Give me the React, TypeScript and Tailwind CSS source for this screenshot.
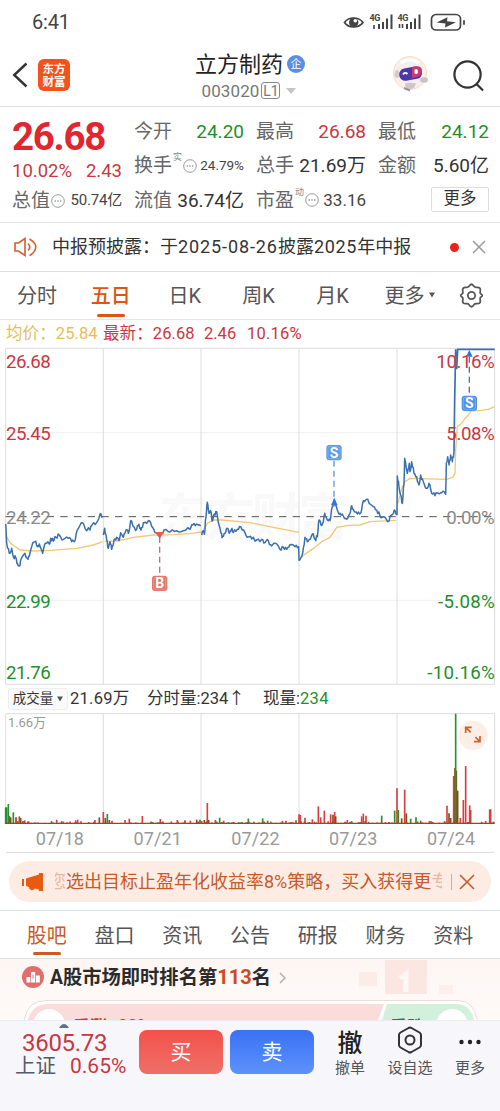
import React from 'react';
import clsx from 'clsx';

type Point = [number, number];
type Bar = [number, number, 'r' | 'g' | 'b'];

const RED = '#c9373f';
const GREEN = '#1f8f2b';
const GRID = '#dcdcdc';

// 价格线, 每个交易日一段 (坐标单位为 1/3 像素)
const priceDays: Point[][] = [
    [[17, 552], [20, 610], [28, 640], [35, 625], [40, 650], [48, 655], [52, 670], [60, 677], [64, 655], [75, 640], [82, 655], [88, 648], [95, 620], [105, 605], [112, 620], [118, 612], [128, 640], [136, 610], [148, 612], [152, 595], [160, 603], [168, 592], [178, 585], [190, 598], [205, 595], [215, 605], [223, 605], [232, 570], [244, 548], [255, 565], [270, 570], [277, 553], [290, 548], [300, 522], [308, 530]],
    [[310, 585], [314, 565], [320, 600], [325, 625], [330, 605], [335, 628], [342, 600], [350, 592], [357, 602], [362, 578], [370, 592], [378, 570], [385, 580], [392, 542], [400, 560], [410, 568], [417, 553], [423, 570], [430, 548], [440, 550], [448, 542], [458, 562], [468, 578], [480, 582], [492, 570], [510, 576], [530, 572], [550, 572], [570, 568], [578, 555], [590, 552], [602, 558]],
    [[605, 585], [610, 572], [613, 583], [618, 530], [622, 487], [627, 520], [632, 512], [636, 543], [643, 522], [650, 515], [657, 555], [663, 580], [668, 590], [675, 580], [682, 565], [688, 580], [694, 568], [700, 578], [712, 568], [722, 560], [735, 578], [745, 590], [755, 597], [770, 600], [785, 598], [795, 608], [805, 602], [815, 618], [825, 610], [840, 628], [850, 622], [860, 628], [870, 614], [885, 620], [896, 620], [897, 662]],
    [[898, 662], [908, 640], [915, 592], [922, 605], [930, 598], [937, 582], [945, 598], [952, 590], [957, 540], [963, 555], [970, 545], [974, 520], [982, 540], [990, 542], [997, 500], [1003, 478], [1012, 510], [1020, 520], [1030, 528], [1040, 538], [1050, 520], [1055, 497], [1063, 515], [1072, 522], [1082, 520], [1090, 482], [1100, 478], [1110, 492], [1120, 500], [1130, 510], [1140, 528], [1150, 530], [1163, 545], [1175, 525], [1183, 510], [1190, 525]],
    [[1191, 525], [1192, 408], [1197, 440], [1202, 465], [1207, 490], [1212, 430], [1214, 355], [1222, 400], [1228, 370], [1230, 395], [1235, 365], [1242, 400], [1250, 410], [1257, 435], [1262, 405], [1270, 425], [1280, 445], [1287, 430], [1295, 460], [1305, 467], [1315, 460], [1325, 458], [1337, 463], [1339, 370], [1343, 350], [1347, 375], [1352, 345], [1357, 365], [1362, 335]],
];

const avgDays: Point[][] = [
    [[17, 585], [30, 608], [60, 630], [100, 633], [150, 631], [230, 625], [280, 615], [308, 605]],
    [[314, 604], [350, 603], [400, 592], [460, 585], [520, 584], [570, 581], [603, 576]],
    [[606, 578], [622, 550], [640, 540], [665, 540], [750, 548], [820, 562], [897, 577]],
    [[898, 658], [918, 640], [945, 622], [965, 605], [990, 592], [1010, 562], [1045, 556], [1080, 555], [1110, 545], [1188, 541]],
    [[1194, 490], [1205, 445], [1215, 425], [1230, 415], [1340, 418], [1358, 412], [1365, 400], [1367, 330], [1372, 260], [1385, 250], [1395, 235], [1405, 225], [1415, 212], [1440, 212], [1465, 208], [1483, 200]],
];

const volumes: Bar[] = [
    [17, 50, 'g'], [20, 50, 'g'], [25, 60, 'g'], [28, 24, 'g'], [32, 20, 'b'], [40, 35, 'g'], [48, 20, 'b'], [58, 23, 'r'], [62, 18, 'b'], [74, 11, 'r'], [86, 8, 'r'],
    [170, 13, 'r'], [227, 11, 'r'], [233, 13, 'r'], [243, 8, 'r'], [285, 12, 'r'], [298, 20, 'b'], [310, 36, 'r'], [316, 18, 'b'], [322, 30, 'g'], [328, 12, 'b'], [336, 10, 'r'], [375, 12, 'r'], [388, 16, 'r'], [427, 24, 'r'], [481, 15, 'r'],
    [532, 12, 'r'], [555, 11, 'r'], [571, 10, 'r'], [590, 13, 'b'], [600, 13, 'g'], [613, 12, 'b'], [622, 63, 'r'], [626, 12, 'b'], [646, 12, 'r'], [659, 19, 'g'], [671, 10, 'r'], [745, 16, 'g'],
    [788, 17, 'g'], [803, 10, 'g'], [847, 9, 'r'], [858, 10, 'r'], [888, 11, 'g'], [897, 29, 'r'], [901, 27, 'r'], [915, 19, 'r'], [937, 14, 'r'], [955, 53, 'r'], [962, 20, 'r'], [973, 40, 'r'], [992, 29, 'r'], [999, 28, 'b'], [1004, 36, 'r'], [1007, 23, 'b'],
    [1042, 12, 'r'], [1085, 23, 'r'], [1090, 31, 'r'], [1098, 25, 'r'], [1145, 25, 'g'], [1184, 40, 'g'], [1191, 107, 'r'], [1195, 42, 'g'], [1205, 17, 'b'], [1214, 103, 'r'], [1219, 32, 'b'], [1232, 16, 'g'], [1248, 20, 'g'], [1262, 10, 'g'],
    [1341, 55, 'r'], [1347, 32, 'b'], [1352, 18, 'b'], [1361, 144, 'r'], [1365, 168, 'b'], [1369, 160, 'b'], [1373, 100, 'b'], [1367, 331, 'g'], [1381, 18, 'r'], [1390, 72, 'r'], [1397, 174, 'r'], [1409, 56, 'r'], [1412, 42, 'r'], [1457, 9, 'r'], [1469, 44, 'r'], [1472, 44, 'r'],
];

const barColor = { r: '#d8403f', g: '#2b8f2e', b: '#8a4a16' };

const rand = (n: number) => {
    const v = Math.sin(n * 12.9898) * 43758.5453;
    return v - Math.floor(v);
};

// 在相邻两点之间补两个抖动点
const jitterPath = (points: Point[]) =>
    points
        .map(([x, y], i) => {
            if (i === 0) return `M${x} ${y}`;
            const [px, py] = points[i - 1];
            const mids = [1, 2].map((k) => {
                const mx = px + ((x - px) * k) / 3;
                const my = py + ((y - py) * k) / 3 + (rand(x + y + k * 7) - 0.5) * 13;
                return `L${mx.toFixed(1)} ${my.toFixed(1)}`;
            });
            return `${mids.join('')}L${x} ${y}`;
        })
        .join('');

const curvePath = (points: Point[]) => points.map(([x, y], i) => `${i ? 'L' : 'M'}${x} ${y}`).join('');

const noiseBars = Array.from({ length: 290 }, (_, i) => ({
    x: 18 + i * 5.06,
    h: 3 + Math.pow(rand(i + 3), 4) * 6,
    c: barColor[rand(i + 71) > 0.55 ? 'r' : rand(i + 9) > 0.4 ? 'g' : 'b'],
}));

const dayLines = [17, 310, 603, 897, 1191, 1484];

const Marker = ({ x, y, letter, color }: { x: number; y: number; letter: string; color: string }) => (
    <g>
        <rect x={x - 23} y={y - 23} width="46" height="46" rx="9" fill={color} />
        <rect x={x - 18} y={y - 18} width="36" height="36" rx="5" fill="none" stroke="#fff" strokeOpacity="0.35" strokeWidth="2" />
        <text x={x} y={y + 15} fontSize="42" fontWeight="700" fill="#fff" textAnchor="middle">
            {letter}
        </text>
    </g>
);

const InfoDot = () => (
    <svg viewBox="0 0 14 14" className="ml-px h-3.5 w-3.5 shrink-0" fill="none" stroke="#9a9a9a" strokeWidth="1">
        <circle cx="7" cy="7" r="6.3" />
        <path d="M3.6 7h1.4M6.3 7h1.4M9 7h1.4" strokeWidth="1.3" />
    </svg>
);

function StatusBar() {
    return (
        <div className="flex h-11 items-center justify-between pl-8 pr-[34px] text-[#444]">
            <span className="text-[20px] leading-none tracking-[-0.2px]">6:41</span>
            <svg viewBox="0 0 124 20" className="h-5 w-[124px]" fill="none">
                <path d="M2.500 10.5C6.500 4.500 16.500 4.500 21 10.500C16.500 16.500 6.500 16.500 2.500 10.500Z" stroke="#444" strokeWidth="1.7" />
                <circle cx="11.700" cy="10.500" r="4.700" fill="#444" />
                <circle cx="13.300" cy="8.700" r="1.800" fill="#fff" />
                {[0, 28].map((x) => (
                    <g key={x} transform={`translate(${x + 27.5} 0)`}>
                        <text x="0" y="9" fontSize="9" fontWeight="700" fill="#444" textLength="11">4G</text>
                        <path d={x ? 'M2 12v4M5 12v4' : 'M4.500 13v4'} stroke="#444" strokeWidth="1.600" />
                        <path d="M9.500 12v5M13.500 10v7M17.500 6.500v10.500M22 2.500v14.500" stroke="#444" strokeWidth="2" />
                    </g>
                ))}
                <rect x="89.500" y="2.500" width="29" height="15.500" rx="4.500" stroke="#444" strokeWidth="1.700" />
                <path d="M122 8.200v4.600" stroke="#444" strokeWidth="1.800" />
                <path d="M94.500 10.500L105.500 5.300L105 9.200L114 10.200L103 15.500L103.500 11.500Z" fill="#444" />
            </svg>
        </div>
    );
}

function Header() {
    return (
        <header className="grid h-[63px] grid-cols-[1fr_auto_1fr] items-center border-b border-[#dedede] px-3">
            <div className="flex items-center gap-2.5">
                <svg viewBox="0 0 16 26" className="h-[26px] w-4" fill="none" stroke="#333" strokeWidth="2.4">
                    <path d="M14.5 1.500L2.200 13L14.500 24.500" />
                </svg>
                <div className="flex h-8 w-8 flex-col items-center justify-center rounded-[6px] bg-[#f4511c] font-['Noto_Sans_CJK_SC',sans-serif] text-[11.5px] font-bold leading-[13px] text-white">
                    <span>东方</span>
                    <span>财富</span>
                </div>
            </div>
            <div className="flex flex-col items-center pt-1">
                <div className="flex items-center gap-1">
                    <h1 className="text-[22px] leading-[27px] text-[#222]">立方制药</h1>
                    <span className="flex h-[18px] w-[18px] items-center justify-center rounded-full bg-[#5b8fe4] text-[11px] leading-none text-white">企</span>
                </div>
                <div className="flex items-center gap-0.5 pr-0.5 text-[17px] leading-[26px] text-[#777]">
                    <span className="tracking-[0.1px]">003020</span>
                    <span className="flex h-[17px] w-[19px] items-center justify-center rounded-[3px] border border-[#888] text-[14px] leading-none">L1</span>
                    <svg viewBox="0 0 10 6" className="ml-1 h-1.5 w-2.5">
                        <path d="M0 0H10L5 6Z" fill="#c4c4c4" />
                    </svg>
                </div>
            </div>
            <div className="flex items-center justify-end gap-[22px] pr-[3px]">
                <svg viewBox="0 0 38 38" className="h-[38px] w-[38px]">
                    <circle cx="18" cy="17" r="16.500" fill="#fdeee6" stroke="#f8ddce" />
                    <ellipse cx="18" cy="16" rx="13" ry="11.500" fill="#f3eff1" />
                    <path d="M9 7Q18 1 27 7" stroke="#fff" strokeWidth="3" fill="none" />
                    <ellipse cx="5" cy="18" rx="2.500" ry="4" fill="#d6cdcf" />
                    <ellipse cx="32" cy="24" rx="4" ry="2.700" fill="#c9c1c5" />
                    <rect x="7" y="11.500" width="23" height="12.500" rx="6" fill="#4d36a8" transform="rotate(-10 18 17)" />
                    <path d="M20 11L24 10.200Q30.500 10 30 15Q29.500 20.500 24 21.200L20 22Z" fill="#c73a72" />
                    <path d="M11 18.500Q13 15.500 15.500 18" stroke="#fff" strokeWidth="1.800" fill="none" />
                    <rect x="22.500" y="13" width="3.300" height="5" rx="1.600" fill="#fff" />
                    <path d="M13 27.500Q18 26 24 27.500L22 32Q18 34 14 32Z" fill="#cdc6ca" />
                    <path d="M12 32L18 34.500" stroke="#9a9397" strokeWidth="2" />
                </svg>
                <svg viewBox="0 0 34 34" className="h-[33px] w-[33px]" fill="none" stroke="#333" strokeWidth="2.3">
                    <circle cx="16" cy="16" r="13.500" />
                    <path d="M25.500 26L32 32.500" />
                </svg>
            </div>
        </header>
    );
}

const Cell = ({ label, value, className, note }: { label: string; value: string; className?: string; note?: string }) => (
    <div className="flex h-[34.5px] items-center justify-between">
        <span className="flex items-center text-[#666]">
            {label}
            {note && <sup className="top-[-8px] ml-px text-[9px] leading-none text-[#888]">{note}</sup>}
            {note && <InfoDot />}
        </span>
        <span className={clsx('leading-none', className || 'text-[#333]')}>{value}</span>
    </div>
);

function Quotes() {
    return (
        <section className="grid h-[116px] grid-cols-[110px_110px_110px_111px] gap-x-3 border-b border-[#e6e6e6] px-3 pt-[7px] text-[19px] leading-none">
            <div className="flex flex-col">
                <span className="h-11 pt-[3px] text-[38.5px] font-bold leading-[40px] tracking-[-1.3px] text-[#e0262f]">26.68</span>
                <div className="flex h-[26px] justify-between pt-1 text-[18.5px] text-[#c9373f]">
                    <span>10.02%</span>
                    <span>2.43</span>
                </div>
                <div className="flex h-[33px] items-center justify-between text-[#666]">
                    <span className="flex items-center">
                        总值
                        <InfoDot />
                    </span>
                    <span className="text-[15px] tracking-[-0.2px] text-[#444]">50.74亿</span>
                </div>
            </div>
            <div>
                <Cell label="今开" value="24.20" className="text-[#1f8f2b]" />
                <Cell label="换手" note="实" value="24.79%" className="text-[13.500px] text-[#444]" />
                <Cell label="流值" value="36.74亿" />
            </div>
            <div>
                <Cell label="最高" value="26.68" className="text-[#c9373f]" />
                <Cell label="总手" value="21.69万" />
                <Cell label="市盈" note="动" value="33.16" className="text-[17px] text-[#444]" />
            </div>
            <div>
                <Cell label="最低" value="24.12" className="text-[#1f8f2b]" />
                <Cell label="金额" value="5.60亿" />
                <div className="flex h-[33px] items-center justify-end">
                    <button className="h-[25px] w-[58px] rounded-[2px] border border-[#ddd] text-[16.500px] leading-none text-[#333]">更多</button>
                </div>
            </div>
        </section>
    );
}

function Notice() {
    return (
        <section className="flex h-[49px] items-center border-b border-[#dedede] pl-3.5 pr-3.5">
            <svg viewBox="0 0 24 20" className="mr-3.5 h-5 w-6" fill="none" stroke="#d0602f" strokeWidth="1.6">
                <path d="M1 6h3.500L11 1.500V18.500L4.500 14H1Z" />
                <path d="M14 6.500Q17.500 10 14 13.500" />
                <path d="M15.500 2Q24.500 7 20.500 14Q19 17 15.500 18.500" />
            </svg>
            <p className="flex-1 whitespace-nowrap text-[18px] leading-none text-[#333]">
                中报预披露：于<span className="tracking-[0.9px]">2025-08-26</span>披露<span className="tracking-[0.7px]">2025</span>年中报
            </p>
            <span className="mr-[13px] h-[9px] w-[9px] rounded-full bg-[#e9231c]" />
            <svg viewBox="0 0 14 14" className="h-3.5 w-3.5" stroke="#999" strokeWidth="1.5">
                <path d="M1 1L13 13M13 1L1 13" />
            </svg>
        </section>
    );
}

function PeriodTabs() {
    const tabs = ['分时', '五日', '日K', '周K', '月K'];

    return (
        <nav className="flex h-12 items-center border-b border-[#e4e4e4] text-[20px] leading-none text-[#555]">
            <ul className="flex">
                {tabs.map((tab) => (
                    <li key={tab} className="relative w-[73.900px] py-3.5 text-center">
                        <span className={clsx(tab === '五日' && 'font-medium text-[#dd5417]')}>{tab}</span>
                        {tab === '五日' && <span className="absolute bottom-[3px] left-[23px] h-[3px] w-7 rounded-sm bg-[#dd5417]" />}
                    </li>
                ))}
            </ul>
            <div className="ml-[15px] flex items-center gap-[5px]">
                更多
                <svg viewBox="0 0 7 7" className="mb-0.5 h-1.5 w-1.5">
                    <path d="M0 0.500H7L3.500 6.500Z" fill="#555" />
                </svg>
            </div>
            <svg viewBox="0 0 24 24" className="ml-6 h-[25px] w-[25px]" fill="none" stroke="#555" strokeWidth="1.7" strokeLinejoin="round">
                <path d="M9.600 3.200Q12 -0.800 14.400 3.200Q15.200 4.300 16.600 4.200Q21.500 3.700 20.300 8.200Q19.900 9.500 20.800 10.300Q24 12 20.800 13.700Q19.900 14.500 20.300 15.800Q21.500 20.300 16.600 19.800Q15.200 19.700 14.400 20.800Q12 24.800 9.600 20.800Q8.800 19.700 7.400 19.800Q2.500 20.300 3.700 15.800Q4.100 14.500 3.200 13.700Q0 12 3.200 10.300Q4.100 9.500 3.700 8.200Q2.500 3.700 7.400 4.200Q8.800 4.300 9.600 3.200Z" />
                <circle cx="12" cy="12" r="3.500" />
            </svg>
        </nav>
    );
}

function PriceChart() {
    const left: [string, number, string][] = [
        ['26.68', 84, RED],
        ['25.45', 300, RED],
        ['24.22', 551, '#8a8a8a'],
        ['22.99', 803, GREEN],
        ['21.76', 1018, GREEN],
    ];
    const right: [string, number, string, number][] = [
        ['10.16%', 84, RED, 175],
        ['5.08%', 300, RED, 145],
        ['0.00%', 551, '#8a8a8a', 145],
        ['-5.08%', 803, GREEN, 170],
        ['-10.16%', 1018, GREEN, 202],
    ];

    return (
        <svg viewBox="0 21 1500 1014" className="block h-[338px] w-[500px]" fill="none">
            <g fontSize="150" fontWeight="700" fill="#f9f9f9">
                <text x="475" y="585" textLength="570">东方财富</text>
            </g>
            <g stroke={GRID} strokeWidth="3">
                <path d="M17 25H1484M17 1033H1484" />
                <path d="M17 278H1484M17 781H1484" stroke="#efefef" />
                {dayLines.map((x) => (
                    <path key={x} d={`M${x} 25V1033`} />
                ))}
            </g>
            <path d="M17 530H1484" stroke="#555" strokeWidth="3" strokeDasharray="22 19" />
            {avgDays.map((day, i) => (
                <path key={i} d={curvePath(day)} stroke="#f0c878" strokeWidth="4" strokeLinejoin="round" />
            ))}
            {priceDays.map((day, i) => (
                <path key={i} d={jitterPath(day)} stroke="#3a70ae" strokeWidth="4.500" strokeLinejoin="round" />
            ))}
            <path d="M1362 335L1364 180L1367 28L1370 88L1373 28H1484" stroke="#3a70ae" strokeWidth="5" />

            <path d="M479 590V706" stroke="#b8718a" strokeWidth="4" strokeDasharray="18 12" />
            <path d="M466 576H492L479 596Z" fill="#ea5a50" />
            <Marker x={479} y={730} letter="B" color="#e27468" />
            <path d="M1002 500V362" stroke="#5f95d8" strokeWidth="4" strokeDasharray="18 12" />
            <path d="M993 496L1003 474L1013 496Z" fill="#2f74e0" />
            <Marker x={1002} y={338} letter="S" color="#5b98e6" />
            <path d="M1408 50V166" stroke="#4a6fa8" strokeWidth="4" strokeDasharray="18 12" />
            <path d="M1398 50L1408 30L1418 50Z" fill="#2f74e0" />
            <Marker x={1408} y={190} letter="S" color="#4f92e8" />

            <g fontSize="56">
                {left.map(([text, y, color]) => (
                    <text key={text} x="18" y={y} fill={color} textLength="134">{text}</text>
                ))}
                {right.map(([text, y, color, w]) => (
                    <text key={text} x={1484 - w} y={y} fill={color} textLength={w}>{text}</text>
                ))}
            </g>
        </svg>
    );
}

function VolumeChart() {
    return (
        <svg viewBox="0 0 1500 336" className="block h-28 w-[500px]" fill="none">
            <g stroke={GRID} strokeWidth="3">
                <path d="M17 2H1484" />
                {dayLines.map((x) => (
                    <path key={x} d={`M${x} 2V333`} />
                ))}
            </g>
            <text x="24" y="42" fontSize="39" fill="#999" textLength="114">1.66万</text>
            {noiseBars.map((b) => (
                <path key={b.x} d={`M${b.x} 333V${333 - b.h}`} stroke={b.c} strokeWidth="5" />
            ))}
            {volumes.map(([x, h, c], i) => (
                <path key={i} d={`M${x} 333v${-h}`} stroke={barColor[c]} strokeWidth="5" />
            ))}
            <path d="M15 331H1484" stroke="#b03a22" strokeWidth="4" />
            <circle cx="1419" cy="67" r="44" fill="#fdeee8" />
            <path d="M1412 58L1397 43M1397 60V43H1415M1426 72L1440 86M1440 69V86H1422" stroke="#c9622f" strokeWidth="5" />
        </svg>
    );
}

function Charts() {
    const dates = ['07/18', '07/21', '07/22', '07/23', '07/24'];

    return (
        <section>
            <div className="flex h-[28px] items-center pl-1.5 text-[16.500px] leading-none">
                <span className="w-[97px] whitespace-nowrap tracking-[0.1px] text-[#e6bd5c]">均价：25.84</span>
                <span className="w-[101px] whitespace-nowrap tracking-[0.1px] text-[#c9373f]">最新：26.68</span>
                <span className="w-[43px] text-[#c9373f]">2.46</span>
                <span className="tracking-[0.2px] text-[#c9373f]">10.16%</span>
            </div>
            <div className="-mt-px">
                <PriceChart />
            </div>
            <div className="flex h-[28px] items-center pl-2 text-[16.500px] leading-none text-[#333]">
                <button className="flex h-[22px] w-[60px] items-center justify-center gap-1 rounded-[3px] border border-[#eee] bg-[#fafafa] text-[13.500px]">
                    成交量
                    <svg viewBox="0 0 7 6" className="h-1.5 w-1.5">
                        <path d="M0 0H7L3.500 6Z" fill="#555" />
                    </svg>
                </button>
                <span className="ml-0.5 w-[77px] tracking-[0.25px]">21.69万</span>
                <span className="w-[116px]">分时量:234↑</span>
                <span>
                    现量:<span className="tracking-[0.3px] text-[#1f8f2b]">234</span>
                </span>
            </div>
            <VolumeChart />
            <div className="mx-1.5 h-7 border-b border-[#d9dde0]">
                <div className="ml-[5px] grid h-[27px] w-[489px] grid-cols-5 items-center text-center text-[18px] leading-none tracking-[0.1px] text-[#999]">
                    {dates.map((date) => (
                        <span key={date}>{date}</span>
                    ))}
                </div>
            </div>
        </section>
    );
}

function Promo() {
    return (
        <section className="h-[58px] border-b border-[#d9dfe2] px-[9px] pt-2">
            <div className="flex h-[41px] items-center rounded-full bg-[#fdece4] pl-[13px] pr-[17px] text-[#c65a28]">
                <svg viewBox="0 0 22 18" className="mr-[11px] h-[18px] w-[22px] shrink-0" fill="#e85a10">
                    <path d="M0 6h2v7H0ZM4 5.500L17 1.500V0h4V18h-4V16.500L13 15.500Q11 18 9 17Q7 16 7 14L4 13Z" />
                </svg>
                <div className="flex w-[389px] shrink-0 whitespace-nowrap text-[18px] leading-[26px]">
                    <span className="flex w-[11px] shrink-0 justify-end overflow-hidden opacity-35">您</span>
                    <span className="shrink-0">选出目标止盈年化收益率8%策略，买入获得更</span>
                    <span className="w-[11px] shrink-0 overflow-hidden opacity-35">专</span>
                </div>
                <span className="ml-[7px] h-4 w-px shrink-0 bg-[#d9a78f]" />
                <svg viewBox="0 0 16 16" className="ml-[7px] h-4 w-4 shrink-0" stroke="#c65a28" strokeWidth="1.6">
                    <path d="M1 1L15 15M15 1L1 15" />
                </svg>
            </div>
        </section>
    );
}

function InfoTabs() {
    const tabs = ['股吧', '盘口', '资讯', '公告', '研报', '财务', '资料'];

    return (
        <nav className="h-12 border-b border-[#d9dfe2] px-[13px]">
            <ul className="grid grid-cols-7 text-center text-[20px] leading-none text-[#555]">
                {tabs.map((tab, i) => (
                    <li key={tab} className={clsx('flex h-[47px] flex-col items-center justify-end gap-[3px] pb-[3px]', i === 0 && 'text-[#cc5a26]')}>
                        <span className="leading-[26px]">{tab}</span>
                        <span className={clsx('h-[3px] w-7 rounded-sm', i === 0 && 'bg-[#cc5a26]')} />
                    </li>
                ))}
            </ul>
        </nav>
    );
}

function Ranking() {
    return (
        <section className="h-[61px] overflow-hidden bg-linear-to-b from-[#fdf6f3] to-[#fffaf8]">
            <div className="flex h-[41px] items-center pl-[22px] pb-1">
                <svg viewBox="0 0 22 22" className="mb-0.5 h-[22px] w-[22px]">
                    <circle cx="11" cy="11" r="11" fill="#df6f6c" />
                    <path d="M4.500 11h3.800v5.500H4.500ZM9 6h4.200v10.500H9ZM14 9.500h3.800v7H14Z" fill="#fff" />
                    <path d="M11 8.500v4" stroke="#df6f6c" />
                </svg>
                <p className="ml-1.5 whitespace-nowrap text-[19.3px] font-bold leading-none text-[#2b2b2b]">
                    A股市场即时排名第<span className="text-[20px] text-[#cf4a1c]">113</span>名
                </p>
                <svg viewBox="0 0 7 12" className="ml-2 h-3 w-[7px]" fill="none" stroke="#aaa" strokeWidth="1.4">
                    <path d="M1 1L6 6L1 11" />
                </svg>
                <svg viewBox="0 0 110 40" className="ml-[71px] h-10 w-[110px]">
                    <path d="M2 14h18v14H2Z" fill="#fcece8" />
                    <path d="M28 2h42v34H28Z" fill="#fce6e2" />
                    <path d="M82 27h14v9H82Z" fill="#fdf0ec" />
                    <path d="M43 20L49 16V34" stroke="#fff7f5" strokeWidth="5" fill="none" />
                </svg>
            </div>
            {/* 看涨 / 看跌 投票 */}
            <svg viewBox="0 0 500 20" className="block h-5 w-[500px]">
                <path d="M24 20Q28 0.500 46 0.500H458Q474 0.500 477 20" fill="#fff" stroke="#ecdcd8" />
                <path d="M28 20Q32 4 48 4H384L378 20Z" fill="#fadcda" />
                <path d="M387 4H456Q470 4 474 20H382Z" fill="#d3f0dc" />
                <circle cx="49" cy="25" r="16" fill="#fff" />
                <circle cx="452" cy="25" r="16" fill="#fff" />
                <text x="73" y="33" fontSize="17" fontWeight="700" fill="#c5431f">
                    看涨<tspan x="118" y="30.500">90%</tspan>
                </text>
                <text x="390" y="33" fontSize="17" fontWeight="700" fill="#2c7a52">看跌</text>
            </svg>
        </section>
    );
}

function BottomBar() {
    return (
        <footer className="flex h-[91px] border-t border-[#ececf0] bg-[#f7f7fb] pt-[9px] leading-none">
            <div className="relative w-[139px] text-[#c9373f]">
                <svg viewBox="0 0 10 4" className="absolute -top-1.5 left-[59px] h-1 w-2.5">
                    <path d="M0 4Q5 -4 10 4Z" fill="#5b7486" />
                </svg>
                <div className="flex h-[25px] items-center pl-[22px] text-[24px] tracking-[-0.300px]">3605.73</div>
                <div className="flex h-[22px] items-center gap-3.5 pl-[15px] text-[20.500px]">
                    <span className="text-[#555b66]">上证</span>
                    <span className="text-[21px]">0.65%</span>
                </div>
            </div>
            <button className="h-11 w-[84px] rounded-lg bg-linear-to-b from-[#f4504b] to-[#ed6f68] text-[21px] leading-none text-white">买</button>
            <button className="ml-[7px] h-11 w-[84px] rounded-lg bg-linear-to-b from-[#3b71f3] to-[#5d92fb] text-[21px] leading-none text-white">卖</button>
            <div className="ml-1.5 grid flex-1 grid-cols-3 text-center text-[15px] text-[#555]">
                <div className="flex flex-col items-center pt-px">
                    <span className="flex h-[28px] items-center pb-1 text-[25px] font-medium text-[#222]">撤</span>
                    <span className="leading-[18px]">撤单</span>
                </div>
                <div className="flex flex-col items-center pt-px">
                    <svg viewBox="0 0 26 28" className="mb-px -mt-[5px] h-[28px] w-[26px]" fill="none" stroke="#333" strokeWidth="2" strokeLinejoin="round">
                        <path d="M11.500 2Q13 1.200 14.500 2L22.500 6.500Q24 7.500 24 9V19Q24 20.500 22.500 21.500L14.500 26Q13 26.800 11.500 26L3.500 21.500Q2 20.500 2 19V9Q2 7.500 3.500 6.500Z" />
                        <circle cx="13" cy="14" r="4.500" />
                    </svg>
                    <span className="mt-1 leading-[18px]">设自选</span>
                </div>
                <div className="flex flex-col items-center pt-px">
                    <svg viewBox="0 0 22 28" className="h-[28px] w-[22px]" fill="#222">
                        <circle cx="2.500" cy="11" r="2.200" />
                        <circle cx="11" cy="11" r="2.200" />
                        <circle cx="19.500" cy="11" r="2.200" />
                    </svg>
                    <span className="leading-[18px]">更多</span>
                </div>
            </div>
        </footer>
    );
}

export default function App() {
    return (
        <div className="h-[1111px] w-[500px] overflow-hidden bg-white font-[Roboto,'Noto_Sans_CJK_SC',sans-serif]">
            <StatusBar />
            <Header />
            <Quotes />
            <Notice />
            <PeriodTabs />
            <Charts />
            <Promo />
            <InfoTabs />
            <Ranking />
            <BottomBar />
        </div>
    );
}
